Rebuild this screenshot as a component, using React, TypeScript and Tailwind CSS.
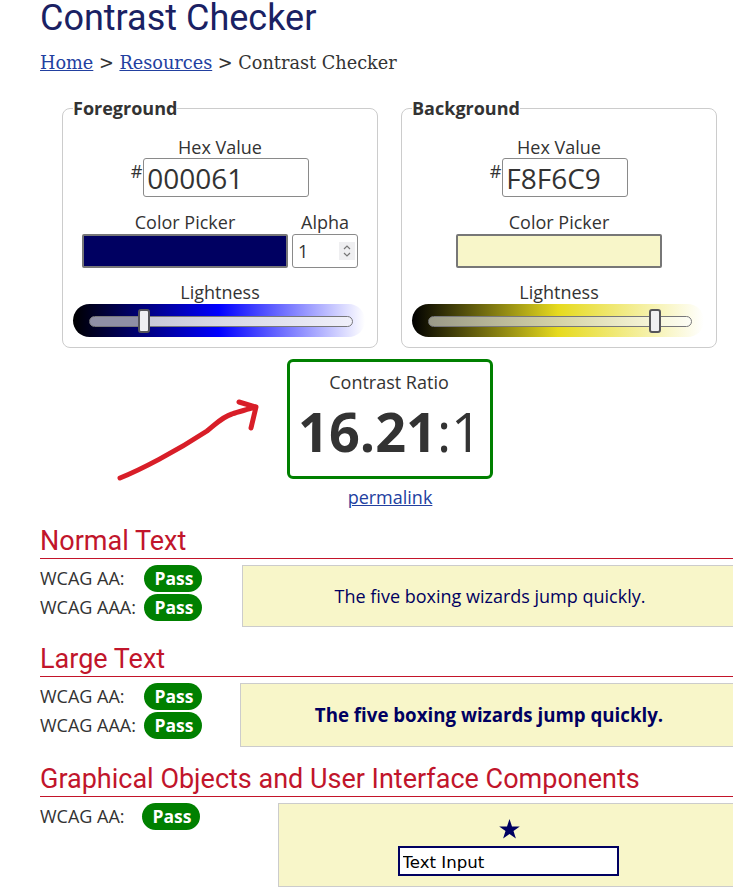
import React from "react";

const sans = "font-['Open_Sans',sans-serif]";

// Lightness slider: gradient strip with the track and thumb on top
function Lightness({ gradient, thumb, fill }: { gradient: string; thumb: string; fill: string }) {
  return (
    <div className={`relative h-[33px] w-[292px] rounded-l-[17px] rounded-r-[17px] px-4 pt-3 ${gradient}`}>
      <div className={`h-[11px] w-[264px] rounded-full border border-[#77777a] ${fill}`} />
      <div className={`absolute top-[5px] h-[24px] w-[12px] rounded-[3px] border-2 border-[#55555a] bg-[#efeff2] ${thumb}`} />
    </div>
  );
}

function HexInput({ value, width }: { value: string; width: string }) {
  return (
    <div className="flex justify-center pl-[2px]">
      <span className="mt-[1px] mr-[1px] text-[18px] leading-[24px]">#</span>
      <input
        readOnly
        value={value}
        className={`h-[39px] rounded-[3px] border border-[#8a8a8a] bg-white pl-[3px] text-[28px] leading-[37px] text-[#333] outline-none ${width}`}
      />
    </div>
  );
}

function Pass() {
  return (
    <span className="flex h-[27px] w-[58px] items-center justify-center rounded-full bg-[#008000] pl-[2px] text-[17.500px] font-bold text-white">
      Pass
    </span>
  );
}

function Heading({ children }: { children: React.ReactNode }) {
  return (
    <h2 className="border-b border-[#c3142a] pt-[2px] font-['Roboto',sans-serif] text-[27px] leading-[34px] text-[#c1152b]">
      {children}
    </h2>
  );
}

function Rows({ rows, pillGap = "w-[104px]" }: { rows: string[]; pillGap?: string }) {
  return (
    <div className="flex shrink-0 flex-col gap-[2px] pt-[6px]">
      {rows.map((label) => (
        <div key={label} className="flex items-center text-[18px] leading-[27px]">
          <span className={pillGap}>{label}</span>
          <Pass />
        </div>
      ))}
    </div>
  );
}

export default function App() {
  return (
    <div className={`relative h-[895px] w-[733px] overflow-hidden bg-white text-[#333] ${sans}`}>
      <h1 className="pl-10 font-['Roboto',sans-serif] text-[36px] leading-[36px] text-[#1a2163]">Contrast Checker</h1>
      <p className="mt-[15px] pl-10 font-['DejaVu_Serif',serif] text-[17.700px] leading-[24px] text-[#333]">
        <a href="#" className="text-[#2240a0] underline">Home</a> &gt;{" "}
        <a href="#" className="text-[#2240a0] underline">Resources</a> &gt; Contrast Checker
      </p>

      <div className="mt-[21px] flex gap-[23px] pl-[62px]">
        <fieldset className="h-[252px] w-[316px] rounded-[8px] border border-[#ccc] pl-[10px] pr-[12px]">
          <legend className="text-[18px] font-bold leading-[24px]">Foreground</legend>
          <div className="pl-[2px] pt-[16px] text-center text-[18px] leading-[22px]">Hex Value</div>
          <HexInput value="000061" width="w-[166px]" />
          <div className="mt-[13px] flex gap-[4px] pl-[9px]">
            <div className="w-[206px] text-center text-[18px] leading-[24px]">
              Color Picker
              <div className="h-[34px] rounded-[2px] border-2 border-[#777] bg-[#000061]" />
            </div>
            <div className="w-[66px] text-center text-[18px] leading-[24px]">
              Alpha
              <div className="relative flex h-[34px] items-center rounded-[3px] border border-[#8a8a8a] pl-[5px] text-left text-[18px]">
                1
                <span className="absolute right-[2px] top-[7px] flex h-[18px] w-[16px] items-center justify-center bg-[#efeff1]">
                  <svg width="10" height="16" viewBox="0 0 10 16" fill="none" stroke="#777" strokeWidth="1.2">
                    <path d="M2 6l3-3 3 3M2 10l3 3 3-3" />
                  </svg>
                </span>
              </div>
            </div>
          </div>
          <div className="mt-[12px] pl-[2px] text-center text-[18px] leading-[24px]">Lightness</div>
          <Lightness
            gradient="bg-[linear-gradient(to_right,#000_0%,#0000ff_50%,#fff_100%)]"
            thumb="left-[65px]"
            fill="bg-[linear-gradient(to_right,#8f8fa5_0%,#8f8fa5_20%,#c8c8d8_22%,#f0f0fa_100%)]"
          />
        </fieldset>

        <fieldset className="h-[252px] w-[316px] rounded-[8px] border border-[#ccc] pl-[10px] pr-[12px]">
          <legend className="text-[18px] font-bold leading-[24px]">Background</legend>
          <div className="pl-[2px] pt-[16px] text-center text-[18px] leading-[22px]">Hex Value</div>
          <HexInput value="F8F6C9" width="w-[126px]" />
          <div className="mt-[13px] pl-[44px]">
            <div className="w-[206px] text-center text-[18px] leading-[24px]">
              Color Picker
              <div className="h-[34px] rounded-[2px] border-2 border-[#777] bg-[#f8f6c9]" />
            </div>
          </div>
          <div className="mt-[12px] pl-[2px] text-center text-[18px] leading-[24px]">Lightness</div>
          <Lightness
            gradient="bg-[linear-gradient(to_right,#000_0%,#e6da1e_50%,#fff_100%)]"
            thumb="left-[237px]"
            fill="bg-[linear-gradient(to_right,#9a9a88_0%,#d5d3a8_50%,#f6f5d8_85%,#fdfdf5_100%)]"
          />
        </fieldset>
      </div>

      <div className="mt-[11px] flex flex-col items-center pl-[47px]">
        <div className="h-[120px] w-[206px] rounded-[6px] border-[3px] border-[#008000] text-center">
          <div className="pr-[2px] pt-[8px] text-[18px] leading-[24px]">Contrast Ratio</div>
          <div className="text-[54px] leading-[74px]">
            <b>16.21</b>:1
          </div>
        </div>
        <a href="#" className="mt-[6px] text-[18px] leading-[24px] text-[#2240a0] underline">permalink</a>
      </div>

      <svg className="absolute left-[110px] top-[395px]" width="155" height="95" viewBox="110 395 155 95" fill="none" stroke="#d81e28" strokeWidth="5" strokeLinecap="round" strokeLinejoin="round">
        <path d="M120 478C140 470 175 452 207 431C216 424 222 417 232 414C240 411 247 410 255 407M239 402L256 407L251 428" />
      </svg>

      <section className="mt-[13px] pl-10">
        <Heading>Normal Text</Heading>
        <div className="flex gap-[40px]">
          <Rows rows={["WCAG AA:", "WCAG AAA:"]} />
          <div className="mt-[6px] flex h-[62px] w-[496px] shrink-0 items-center justify-center border border-[#ccc] bg-[#f8f6c9] text-[18px] text-[#000061]">
            The five boxing wizards jump quickly.
          </div>
        </div>
      </section>

      <section className="mt-[13px] pl-10">
        <Heading>Large Text</Heading>
        <div className="flex gap-[38px]">
          <Rows rows={["WCAG AA:", "WCAG AAA:"]} />
          <div className="mt-[6px] flex h-[64px] w-[498px] shrink-0 items-center justify-center border border-[#ccc] bg-[#f8f6c9] text-[18.700px] font-bold text-[#000061]">
            The five boxing wizards jump quickly.
          </div>
        </div>
      </section>

      <section className="mt-[13px] pl-10">
        <Heading>Graphical Objects and User Interface Components</Heading>
        <div className="flex gap-[78px]">
          <Rows rows={["WCAG AA:"]} pillGap="w-[102px]" />
          <div className="mt-[6px] flex h-[84px] w-[462px] shrink-0 flex-col items-center border border-[#ccc] bg-[#f8f6c9]">
            <svg className="mt-[15px]" width="21" height="20" viewBox="0 0 21 20" fill="#000061">
              <path d="M10.500 0l2.500 7.400h7.800l-6.300 4.600 2.400 7.500-6.400-4.600-6.400 4.600 2.400-7.500-6.300-4.600h7.800z" />
            </svg>
            <input
              readOnly
              value="Text Input"
              className="mr-[2px] mt-[7px] h-[30px] w-[221px] border-2 border-[#000061] bg-white pl-[3px] pt-[2px] font-['DejaVu_Sans',sans-serif] text-[16.600px] text-black outline-none"
            />
          </div>
        </div>
      </section>
    </div>
  );
}
